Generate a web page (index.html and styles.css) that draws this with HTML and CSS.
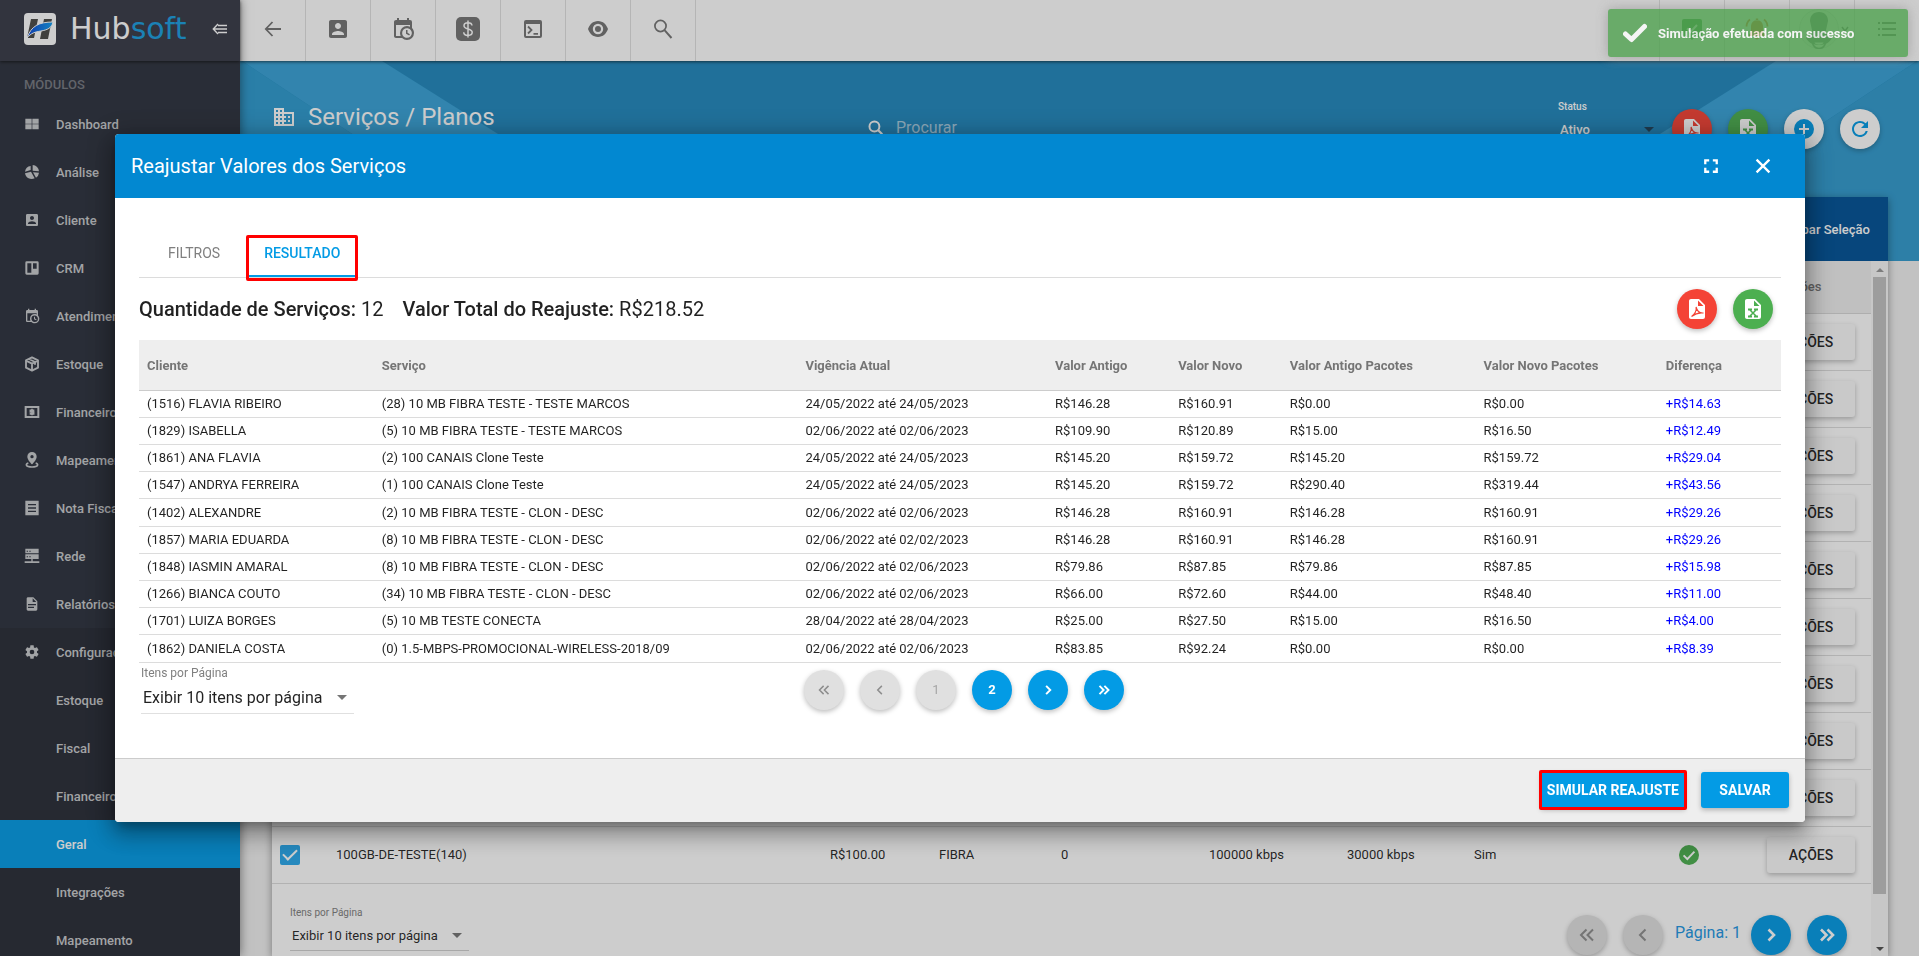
FILE: index.html
```html
<!DOCTYPE html>
<html lang="pt-BR">
<head>
<meta charset="utf-8">
<title>Hubsoft</title>
<link rel="stylesheet" href="styles.css">
</head>
<body>

<!-- icons -->
<svg class="sprite" width="0" height="0">
  <symbol id="i-grid" viewBox="0 0 24 24"><path d="M2 4h9.500v7.500H2zM12.500 4H22v7.500h-9.500zM2 12.500h9.500V20H2zM12.500 12.500H22V20h-9.500z"/></symbol>
  <symbol id="i-pie" viewBox="0 0 24 24"><path d="M10 3a10 10 0 0 0-8.500 8.500L10 9zM13 1.500V10l9.500 1A10 10 0 0 0 13 1.500zM13.500 12.500l4.500 8a10 10 0 0 0 4.500-7.500zM10.500 11.500L1.500 14a10 10 0 0 0 14.500 7.500z"/></symbol>
  <symbol id="i-account" viewBox="0 0 24 24"><path d="M3 5v14c0 1.100.890 2 2 2h14c1.100 0 2-.9 2-2V5c0-1.100-.9-2-2-2H5c-1.110 0-2 .9-2 2zm12 4c0 1.660-1.340 3-3 3s-3-1.340-3-3 1.340-3 3-3 3 1.340 3 3zm-9 8c0-2 4-3.100 6-3.100s6 1.100 6 3.100v1H6v-1z"/></symbol>
  <symbol id="i-trello" viewBox="0 0 24 24"><path fill-rule="evenodd" d="M4 2h16a2 2 0 0 1 2 2v16a2 2 0 0 1-2 2H4a2 2 0 0 1-2-2V4a2 2 0 0 1 2-2zM5 5v14h6V5zM13.500 5v8H19V5z"/></symbol>
  <symbol id="i-calendar" viewBox="0 0 24 24"><path d="M15,13H16.500V15.820L18.940,17.230L18.190,18.530L15,16.690V13M19,8H5V19H9.670C9.240,18.090 9,17.070 9,16A7,7 0 0,1 16,9C17.070,9 18.090,9.240 19,9.670V8M5,21C3.890,21 3,20.100 3,19V5C3,3.890 3.890,3 5,3H6V1H8V3H16V1H18V3H19A2,2 0 0,1 21,5V11.100C22.240,12.360 23,14.090 23,16A7,7 0 0,1 16,23C14.090,23 12.360,22.240 11.100,21H5M16,11.150A4.850,4.850 0 0,0 11.150,16C11.150,18.680 13.320,20.850 16,20.850A4.850,4.850 0 0,0 20.850,16C20.850,13.320 18.680,11.150 16,11.150Z"/></symbol>
  <symbol id="i-box" viewBox="0 0 24 24"><path d="M12 2l9 4.500v11L12 22l-9-4.500v-11zM3 7l9 4.500L21 7M12 11.500V22M7.500 4.500l9 4.500v4" fill="none" stroke="currentColor" stroke-width="2.800" stroke-linejoin="round"/></symbol>
  <symbol id="i-cash" viewBox="0 0 24 24"><path fill-rule="evenodd" d="M1 3h22v18H1zM4 6v12h16V6z"/><path d="M15.500 9.500h-6V12h5v2.800H8.500M12 7v10" fill="none" stroke="currentColor" stroke-width="2.400"/></symbol>
  <symbol id="i-pin" viewBox="0 0 24 24"><path fill-rule="evenodd" d="M12 0a7 7 0 0 1 7 7C19 12 12 18.500 12 18.500S5 12 5 7a7 7 0 0 1 7-7zm0 4.500a2.500 2.500 0 1 0 0 5 2.500 2.500 0 0 0 0-5z"/><path d="M6.500 16.500C2 18 2 22.500 12 22.500s10-4.500 5.500-6" fill="none" stroke="currentColor" stroke-width="2.600"/></symbol>
  <symbol id="i-note" viewBox="0 0 24 24"><path fill-rule="evenodd" d="M2 1h20v22H2zM6 6v2h12V6zM6 11v2h12v-2zM6 16v2h12v-2z"/></symbol>
  <symbol id="i-server" viewBox="0 0 24 24"><path fill-rule="evenodd" d="M2 1h20v7H2zM4 4v1.500h2V4zM8 4v1.500h2V4zM2 9.500h20v7H2zM4 12.500V14h2v-1.500zM8 12.500V14h2v-1.500zM11 16.500h2V20h10v2.500H1V20h10z"/></symbol>
  <symbol id="i-file" viewBox="0 0 24 24"><path d="M13,9H18.500L13,3.500V9M6,2H14L20,8V20A2,2 0 0,1 18,22H6C4.890,22 4,21.100 4,20V4C4,2.890 4.890,2 6,2M15,18V16H6V18H15M18,14V12H6V14H18Z"/></symbol>
  <symbol id="i-gear" viewBox="0 0 24 24"><path d="M12,15.500A3.500,3.500 0 0,1 8.500,12A3.500,3.500 0 0,1 12,8.500A3.500,3.500 0 0,1 15.500,12A3.500,3.500 0 0,1 12,15.500M19.430,12.970C19.470,12.650 19.500,12.330 19.500,12C19.500,11.670 19.470,11.340 19.430,11L21.540,9.370C21.730,9.220 21.780,8.950 21.660,8.730L19.660,5.270C19.540,5.050 19.270,4.960 19.050,5.050L16.560,6.050C16.040,5.660 15.500,5.320 14.870,5.070L14.500,2.420C14.460,2.180 14.250,2 14,2H10C9.750,2 9.540,2.180 9.500,2.420L9.130,5.070C8.500,5.320 7.960,5.660 7.440,6.050L4.950,5.050C4.730,4.960 4.460,5.050 4.340,5.270L2.340,8.730C2.210,8.950 2.270,9.220 2.460,9.370L4.570,11C4.530,11.340 4.500,11.670 4.500,12C4.500,12.330 4.530,12.650 4.570,12.970L2.460,14.630C2.270,14.780 2.210,15.050 2.340,15.270L4.340,18.730C4.460,18.950 4.730,19.030 4.950,18.950L7.440,17.940C7.960,18.340 8.500,18.680 9.130,18.930L9.500,21.580C9.540,21.820 9.750,22 10,22H14C14.250,22 14.460,21.820 14.500,21.580L14.870,18.930C15.500,18.670 16.040,18.340 16.560,17.940L19.050,18.950C19.270,19.030 19.540,18.950 19.660,18.730L21.660,15.270C21.780,15.050 21.730,14.780 21.540,14.630L19.430,12.970Z"/></symbol>
  <symbol id="i-domain" viewBox="0 0 24 24"><path d="M12 7V3H2v18h20V7H12zM6 19H4v-2h2v2zm0-4H4v-2h2v2zm0-4H4V9h2v2zm0-4H4V5h2v2zm4 12H8v-2h2v2zm0-4H8v-2h2v2zm0-4H8V9h2v2zm0-4H8V5h2v2zm10 12h-8v-2h2v-2h-2v-2h2v-2h-2V9h8v10zm-2-8h-2v2h2v-2zm0 4h-2v2h2v-2z"/></symbol>
  <symbol id="i-back" viewBox="0 0 24 24"><path d="M20 12H5M11.500 5L4.800 12l6.700 7" fill="none" stroke="currentColor" stroke-width="1.800"/></symbol>
  <symbol id="i-dollar" viewBox="0 0 24 24"><rect width="24" height="24" rx="5"/><path d="M16 8.500C15.800 6.600 14.300 5.700 12 5.700c-2.400 0-4 1.100-4 3 0 4.300 8.200 2.200 8.200 6.600 0 2-1.800 3.100-4.200 3.100-2.500 0-4.200-1.100-4.300-3.200M12 3.500v17" fill="none" stroke="#fff" stroke-width="1.500"/></symbol>
  <symbol id="i-console" viewBox="0 0 24 24"><path fill-rule="evenodd" d="M5 3h14a2 2 0 0 1 2 2v14a2 2 0 0 1-2 2H5a2 2 0 0 1-2-2V5a2 2 0 0 1 2-2zM5 7v12h14V7z"/><path d="M7 9.500l3.500 3.500L7 16.500M12.500 16.800H17" fill="none" stroke="currentColor" stroke-width="1.800"/></symbol>
  <symbol id="i-eye" viewBox="0 0 24 24"><path fill-rule="evenodd" d="M12 4c5 0 8.500 3.600 10 8-1.500 4.400-5 8-10 8S3.500 16.400 2 12c1.500-4.400 5-8 10-8zm0 2.800a5.200 5.200 0 1 0 0 10.400 5.200 5.200 0 0 0 0-10.400z"/><circle cx="12" cy="12" r="3"/></symbol>
  <symbol id="i-search" viewBox="0 0 24 24"><circle cx="9.500" cy="9" r="5.600" fill="none" stroke="currentColor" stroke-width="1.700"/><path d="M13.500 13.200L20.500 21" fill="none" stroke="currentColor" stroke-width="2"/></symbol>
  <symbol id="i-find" viewBox="0 0 24 24"><circle cx="10.500" cy="10.500" r="7" fill="none" stroke="currentColor" stroke-width="2.800"/><path d="M15.500 15.500L21.500 21.500" fill="none" stroke="currentColor" stroke-width="3.200"/></symbol>
  <symbol id="i-collapse" viewBox="0 0 16 12"><path d="M6 2.500h9M2 6h13M6 9.500h9M6 1L1.300 6 6 11" fill="none" stroke="currentColor" stroke-width="1.400"/></symbol>
  <symbol id="i-task" viewBox="0 0 24 24"><path d="M4 2h16a2 2 0 0 1 2 2v14a2 2 0 0 1-2 2h-5l-3 3-3-3H4a2 2 0 0 1-2-2V4a2 2 0 0 1 2-2z"/><path d="M7 11.500l3.500 3.500L17 8" fill="none" stroke="#fff" stroke-width="2"/></symbol>
  <symbol id="i-bell" viewBox="0 0 24 24"><path d="M12 3a6 6 0 0 0-6 6v6l-2 2.500V19h16v-1.500L18 15V9a6 6 0 0 0-6-6zM10 20.500a2 2 0 0 0 4 0zM10.800 1.500h2.400v2h-2.400z"/><path d="M5 2.500A9 9 0 0 0 1.500 9.500M19 2.500a9 9 0 0 1 3.500 7" fill="none" stroke="currentColor" stroke-width="1.800"/></symbol>
  <symbol id="i-person" viewBox="0 0 40 40"><circle cx="20" cy="20" r="19.500" fill="#f7f7f7" stroke="#e4e4e4"/><path d="M20 3c-6 0-9 4-9 9l2 9c0 4-2 6-6 8 3 5 7 7 13 7s10-2 13-7c-4-2-6-4-6-8l2-9c0-5-3-9-9-9z" fill="#7c8a85"/><path d="M13.500 33a6.500 6.500 0 0 0 13 0" fill="none" stroke="#7c8a85" stroke-width="1.500"/><path d="M15.500 33.500h9c-1 3-8 3-9 0z" fill="#f7f7f7"/></symbol>
  <symbol id="i-down" viewBox="0 0 8 8"><path d="M1 2l3 4 3-4" fill="none" stroke="currentColor" stroke-width="1.500"/></symbol>
  <symbol id="i-list" viewBox="0 0 20 16"><path d="M5 2h14M5 8h14M5 14h14M1 2h2M1 8h2M1 14h2" fill="none" stroke="currentColor" stroke-width="2"/></symbol>
  <symbol id="i-pdf" viewBox="0 0 24 24"><path d="M13,9H18.500L13,3.500V9M6,2H14L20,8V20A2,2 0 0,1 18,22H6C4.890,22 4,21.100 4,20V4C4,2.890 4.890,2 6,2Z"/><path d="M6.500 19.500c3.500-2.500 5-6.500 4.600-9.500 1 4 3 6.500 7.400 6-4-.6-8.500.8-12 3.500z" fill="none" stroke="#f44336" stroke-width="1.100"/></symbol>
  <symbol id="i-xls" viewBox="0 0 24 24"><path d="M13,9H18.500L13,3.500V9M6,2H14L20,8V20A2,2 0 0,1 18,22H6C4.890,22 4,21.100 4,20V4C4,2.890 4.890,2 6,2Z"/><path d="M9 13l6 6M15 13l-6 6" fill="none" stroke="#4caf50" stroke-width="1.500"/><path d="M7 11.500h4v2H7zM13 11.500h4v2h-4zM7 18.500h4v2H7zM13 18.500h4v2h-4z" fill="#4caf50"/></symbol>
  <symbol id="i-plus" viewBox="0 0 24 24"><circle cx="12" cy="12" r="10"/><path d="M12 7v10M7 12h10" stroke="#fff" stroke-width="2"/></symbol>
  <symbol id="i-refresh" viewBox="0 0 24 24"><path d="M17.650 6.350A7.958 7.958 0 0 0 12 4c-4.420 0-7.990 3.580-7.990 8s3.570 8 7.990 8c3.730 0 6.840-2.550 7.730-6h-2.080A5.990 5.990 0 0 1 12 18c-3.310 0-6-2.690-6-6s2.690-6 6-6c1.660 0 3.140.690 4.220 1.780L13 11h7V4l-2.350 2.350z"/></symbol>
  <symbol id="i-full" viewBox="0 0 24 24"><path d="M7 14H4.500v5.500H10V17H7v-3zM4.500 10H7V7h3V4.500H4.500V10zM17 17h-3v2.500h5.500V14H17v3zM14 4.500V7h3v3h2.500V4.500H14z"/></symbol>
  <symbol id="i-close" viewBox="0 0 24 24"><path d="M5 5l14 14M19 5L5 19" stroke="currentColor" stroke-width="2.500"/></symbol>
  <symbol id="i-ok" viewBox="0 0 24 24"><circle cx="12" cy="12" r="12"/><path d="M5.500 12.500l4.500 4.500 8.500-9" fill="none" stroke="#fff" stroke-width="2.400"/></symbol>
  <symbol id="i-check" viewBox="0 0 24 20"><path d="M2.500 11L8.500 16.500 21.500 3.500" fill="none" stroke="currentColor" stroke-width="5" stroke-linecap="round" stroke-linejoin="round"/></symbol>
  <symbol id="i-first" viewBox="0 0 24 24"><path d="M11.500 6.500L6 12l5.500 5.500M18 6.500L12.500 12l5.500 5.500" fill="none" stroke="currentColor" stroke-width="2"/></symbol>
  <symbol id="i-prev" viewBox="0 0 24 24"><path d="M14.500 6.500L9 12l5.500 5.500" fill="none" stroke="currentColor" stroke-width="2"/></symbol>
  <symbol id="i-next" viewBox="0 0 24 24"><path d="M9.500 6.500L15 12l-5.500 5.500" fill="none" stroke="currentColor" stroke-width="2.600"/></symbol>
  <symbol id="i-last" viewBox="0 0 24 24"><path d="M6 6.500l5.500 5.500L6 17.500M12.500 6.500L18 12l-5.500 5.500" fill="none" stroke="currentColor" stroke-width="2.600"/></symbol>
</svg>

<div class="app">

  <aside class="sidebar">
    <div class="brand">
      <svg class="brand-mark" viewBox="0 0 32 32">
        <defs><linearGradient id="swoosh"><stop offset="0" stop-color="#0b45d8"/><stop offset="1" stop-color="#10a0f0"/></linearGradient></defs>
        <rect width="32" height="32" rx="4" fill="#fff"/>
        <path d="M7 6h7l-4 19H3zM20 6h8l-4 20h-8z" fill="#4a4a48"/>
        <path d="M3 25C7 13 15 9 29 9c-1 6-6 8-12 9-6 1-10 2-14 7z" fill="url(#swoosh)" stroke="#fff" stroke-width="1"/>
      </svg>
      <span class="brand-name">Hub<span>soft</span></span>
      <button class="collapse" aria-label="Recolher"><svg><use href="#i-collapse"/></svg></button>
    </div>
    <nav class="menu">
      <h2>MÓDULOS</h2>
      <a href="#"><svg><use href="#i-grid"/></svg>Dashboard</a>
      <a href="#"><svg><use href="#i-pie"/></svg>Análise</a>
      <a href="#"><svg><use href="#i-account"/></svg>Cliente</a>
      <a href="#"><svg><use href="#i-trello"/></svg>CRM</a>
      <a href="#"><svg><use href="#i-calendar"/></svg>Atendimento</a>
      <a href="#"><svg><use href="#i-box"/></svg>Estoque</a>
      <a href="#"><svg><use href="#i-cash"/></svg>Financeiro</a>
      <a href="#"><svg><use href="#i-pin"/></svg>Mapeamento</a>
      <a href="#"><svg><use href="#i-note"/></svg>Nota Fiscal</a>
      <a href="#"><svg><use href="#i-server"/></svg>Rede</a>
      <a href="#"><svg><use href="#i-file"/></svg>Relatórios</a>
      <div class="submenu">
        <a href="#"><svg><use href="#i-gear"/></svg>Configurações</a>
        <a class="sub" href="#">Estoque</a>
        <a class="sub" href="#">Fiscal</a>
        <a class="sub" href="#">Financeiro</a>
        <a class="sub active" href="#">Geral</a>
        <a class="sub" href="#">Integrações</a>
        <a class="sub" href="#">Mapeamento</a>
      </div>
    </nav>
  </aside>

  <div class="main">
    <header class="toolbar">
      <button aria-label="Voltar"><svg><use href="#i-back"/></svg></button>
      <button aria-label="Cliente"><svg><use href="#i-account"/></svg></button>
      <button aria-label="Agenda"><svg><use href="#i-calendar"/></svg></button>
      <button aria-label="Financeiro"><svg><use href="#i-dollar"/></svg></button>
      <button aria-label="Console"><svg><use href="#i-console"/></svg></button>
      <button aria-label="Visualizar"><svg><use href="#i-eye"/></svg></button>
      <button aria-label="Buscar"><svg><use href="#i-search"/></svg></button>
      <div class="toolbar-right">
        <button class="green" aria-label="Tarefas"><svg><use href="#i-task"/></svg></button>
        <button class="orange" aria-label="Notificações"><svg><use href="#i-bell"/></svg></button>
        <button class="user" aria-label="Usuário"><svg><use href="#i-person"/></svg><svg class="caret"><use href="#i-down"/></svg></button>
        <button aria-label="Lista"><svg class="list"><use href="#i-list"/></svg></button>
      </div>
    </header>

    <div class="hero">
      <svg class="hero-art" viewBox="0 0 1679 200" preserveAspectRatio="none">
        <path d="M2 0H142L460 200H304z" fill="#38a2d7"/>
        <path d="M0 0H2L304 200H0z" fill="#2e9bd0"/>
        <path d="M1677 0H1536L1218 200H1374z" fill="#38a2d7"/>
        <path d="M1679 0H1677L1374 200H1679z" fill="#319bcf"/>
      </svg>
      <div class="page-head">
        <h1><svg><use href="#i-domain"/></svg>Serviços / Planos</h1>
        <div class="search">
          <svg><use href="#i-find"/></svg>
          <input type="text" placeholder="Procurar" aria-label="Procurar">
        </div>
        <div class="head-actions">
          <div class="status">
            <label for="status">Status</label>
            <div class="pick"><select id="status"><option>Ativo</option></select><i></i></div>
          </div>
          <button class="round red" aria-label="PDF"><svg><use href="#i-pdf"/></svg></button>
          <button class="round green" aria-label="Excel"><svg><use href="#i-xls"/></svg></button>
          <button class="round white" aria-label="Adicionar"><svg><use href="#i-plus"/></svg></button>
          <button class="round white" aria-label="Atualizar"><svg><use href="#i-refresh"/></svg></button>
        </div>
      </div>
    </div>

    <section class="card">
      <div class="card-bar"><button>Limpar Seleção</button></div>
      <div class="card-body">
        <div class="card-scroll">
          <table class="plans">
            <colgroup><col class="w-sel"><col><col class="w-price"><col class="w-kind"><col class="w-qty"><col class="w-down"><col class="w-up"><col class="w-flag"><col class="w-ok"><col class="w-act"></colgroup>
            <thead><tr><th></th><th></th><th></th><th></th><th></th><th></th><th></th><th></th><th></th><th>Ações</th></tr></thead>
            <tbody>
              <tr><td colspan="9"></td><td><button class="flat">AÇÕES</button></td></tr>
              <tr><td colspan="9"></td><td><button class="flat">AÇÕES</button></td></tr>
              <tr><td colspan="9"></td><td><button class="flat">AÇÕES</button></td></tr>
              <tr><td colspan="9"></td><td><button class="flat">AÇÕES</button></td></tr>
              <tr><td colspan="9"></td><td><button class="flat">AÇÕES</button></td></tr>
              <tr><td colspan="9"></td><td><button class="flat">AÇÕES</button></td></tr>
              <tr><td colspan="9"></td><td><button class="flat">AÇÕES</button></td></tr>
              <tr><td colspan="9"></td><td><button class="flat">AÇÕES</button></td></tr>
              <tr><td colspan="9"></td><td><button class="flat">AÇÕES</button></td></tr>
              <tr>
                <td><input type="checkbox" checked aria-label="Selecionar"></td>
                <td>100GB-DE-TESTE(140)</td><td>R$100.00</td><td>FIBRA</td><td>0</td>
                <td>100000 kbps</td><td>30000 kbps</td><td>Sim</td>
                <td><svg class="ok"><use href="#i-ok"/></svg></td>
                <td><button class="flat">AÇÕES</button></td>
              </tr>
            </tbody>
          </table>
          <div class="card-foot">
            <div class="per-page small">
              <label for="pp1">Itens por Página</label>
              <div class="pick"><select id="pp1"><option>Exibir 10 itens por página</option></select><i></i></div>
            </div>
            <div class="pages">
              <button class="round off" aria-label="Primeira"><svg><use href="#i-first"/></svg></button>
              <button class="round off" aria-label="Anterior"><svg><use href="#i-prev"/></svg></button>
              <span>Página: 1</span>
              <button class="round blue" aria-label="Próxima"><svg><use href="#i-next"/></svg></button>
              <button class="round blue" aria-label="Última"><svg><use href="#i-last"/></svg></button>
            </div>
          </div>
        </div>
        <div class="scrollbar"><i class="up"></i><b></b><i class="down"></i></div>
      </div>
    </section>
  </div>
</div>

<div class="backdrop">
  <div class="dialog" role="dialog" aria-labelledby="dlg-title">
    <header class="dialog-head">
      <h2 id="dlg-title">Reajustar Valores dos Serviços</h2>
      <button aria-label="Tela cheia"><svg><use href="#i-full"/></svg></button>
      <button aria-label="Fechar"><svg><use href="#i-close"/></svg></button>
    </header>

    <div class="dialog-body">
      <div class="tabs" role="tablist">
        <button role="tab">FILTROS</button>
        <button role="tab" class="current marked" aria-selected="true">RESULTADO</button>
      </div>

      <div class="totals">
        <p><b>Quantidade de Serviços:</b> 12</p>
        <p><b>Valor Total do Reajuste:</b> R$218.52</p>
        <div class="exports">
          <button class="round red" aria-label="Exportar PDF"><svg><use href="#i-pdf"/></svg></button>
          <button class="round green" aria-label="Exportar Excel"><svg><use href="#i-xls"/></svg></button>
        </div>
      </div>

      <table class="result">
        <thead>
          <tr><th>Cliente</th><th>Serviço</th><th>Vigência Atual</th><th>Valor Antigo</th><th>Valor Novo</th><th>Valor Antigo Pacotes</th><th>Valor Novo Pacotes</th><th>Diferença</th></tr>
        </thead>
        <tbody>
          <tr><td>(1516) FLAVIA RIBEIRO</td><td>(28) 10 MB FIBRA TESTE - TESTE MARCOS</td><td>24/05/2022 até 24/05/2023</td><td>R$146.28</td><td>R$160.91</td><td>R$0.00</td><td>R$0.00</td><td>+R$14.63</td></tr>
          <tr><td>(1829) ISABELLA</td><td>(5) 10 MB FIBRA TESTE - TESTE MARCOS</td><td>02/06/2022 até 02/06/2023</td><td>R$109.90</td><td>R$120.89</td><td>R$15.00</td><td>R$16.50</td><td>+R$12.49</td></tr>
          <tr><td>(1861) ANA FLAVIA</td><td>(2) 100 CANAIS Clone Teste</td><td>24/05/2022 até 24/05/2023</td><td>R$145.20</td><td>R$159.72</td><td>R$145.20</td><td>R$159.72</td><td>+R$29.04</td></tr>
          <tr><td>(1547) ANDRYA FERREIRA</td><td>(1) 100 CANAIS Clone Teste</td><td>24/05/2022 até 24/05/2023</td><td>R$145.20</td><td>R$159.72</td><td>R$290.40</td><td>R$319.44</td><td>+R$43.56</td></tr>
          <tr><td>(1402) ALEXANDRE</td><td>(2) 10 MB FIBRA TESTE - CLON - DESC</td><td>02/06/2022 até 02/06/2023</td><td>R$146.28</td><td>R$160.91</td><td>R$146.28</td><td>R$160.91</td><td>+R$29.26</td></tr>
          <tr><td>(1857) MARIA EDUARDA</td><td>(8) 10 MB FIBRA TESTE - CLON - DESC</td><td>02/06/2022 até 02/02/2023</td><td>R$146.28</td><td>R$160.91</td><td>R$146.28</td><td>R$160.91</td><td>+R$29.26</td></tr>
          <tr><td>(1848) IASMIN AMARAL</td><td>(8) 10 MB FIBRA TESTE - CLON - DESC</td><td>02/06/2022 até 02/06/2023</td><td>R$79.86</td><td>R$87.85</td><td>R$79.86</td><td>R$87.85</td><td>+R$15.98</td></tr>
          <tr><td>(1266) BIANCA COUTO</td><td>(34) 10 MB FIBRA TESTE - CLON - DESC</td><td>02/06/2022 até 02/06/2023</td><td>R$66.00</td><td>R$72.60</td><td>R$44.00</td><td>R$48.40</td><td>+R$11.00</td></tr>
          <tr><td>(1701) LUIZA BORGES</td><td>(5) 10 MB TESTE CONECTA</td><td>28/04/2022 até 28/04/2023</td><td>R$25.00</td><td>R$27.50</td><td>R$15.00</td><td>R$16.50</td><td>+R$4.00</td></tr>
          <tr><td>(1862) DANIELA COSTA</td><td>(0) 1.5-MBPS-PROMOCIONAL-WIRELESS-2018/09</td><td>02/06/2022 até 02/06/2023</td><td>R$83.85</td><td>R$92.24</td><td>R$0.00</td><td>R$0.00</td><td>+R$8.39</td></tr>
        </tbody>
      </table>

      <div class="result-foot">
        <div class="per-page">
          <label for="pp2">Itens por Página</label>
          <div class="pick"><select id="pp2"><option>Exibir 10 itens por página</option></select><i></i></div>
        </div>
        <div class="pages">
          <button class="round off" aria-label="Primeira"><svg><use href="#i-first"/></svg></button>
          <button class="round off" aria-label="Anterior"><svg><use href="#i-prev"/></svg></button>
          <button class="round off">1</button>
          <button class="round blue">2</button>
          <button class="round blue" aria-label="Próxima"><svg><use href="#i-next"/></svg></button>
          <button class="round blue" aria-label="Última"><svg><use href="#i-last"/></svg></button>
        </div>
      </div>
    </div>

    <footer class="dialog-foot">
      <button class="primary wide marked">SIMULAR REAJUSTE</button>
      <button class="primary">SALVAR</button>
    </footer>
  </div>
</div>

<div class="toast" role="status"><svg><use href="#i-check"/></svg>Simulação efetuada com sucesso</div>

</body>
</html>
```

FILE: styles.css
```css
* { box-sizing: border-box; }
html, body { height: 100%; margin: 0; overflow: hidden; }
body { font-family: Roboto, "Noto Sans", sans-serif; font-size: 13px; color: rgba(0,0,0,.87); background: #f1f1f1; }
h1, h2, p { margin: 0; font-weight: 400; }
a { text-decoration: none; color: inherit; }
button, select, input { font: inherit; color: inherit; }
button { border: 0; padding: 0; background: none; cursor: pointer; }
svg { fill: currentColor; display: block; }
.sprite { position: absolute; }

.app { display: flex; height: 100vh; overflow: hidden; }

/* sidebar */
.sidebar { flex: 0 0 240px; background: #2d323e; color: #c8cacd; box-shadow: 0 0 10px rgba(0,0,0,.5); z-index: 2; }
.brand { display: flex; align-items: center; height: 61px; padding: 0 12px 3px 24px; background: #383a48; color: #fff; box-shadow: 0 1px 3px rgba(0,0,0,.6); }
.brand-mark { width: 32px; height: 32px; margin-right: 14px; }
.brand-name { flex: 1; font-family: "DejaVu Sans", sans-serif; font-size: 30px; line-height: 32px; }
.brand-name span { color: #1a9fe0; }
.collapse svg { width: 16px; height: 12px; }
.menu { display: flex; flex-direction: column; }
.menu h2 { height: 39px; padding: 4px 24px 0; line-height: 39px; font-size: 13px; font-weight: 500; color: #767981; }
.menu a { display: flex; align-items: center; height: 48px; padding: 0 24px; font-weight: 500; }
.menu svg { width: 16px; height: 16px; margin-right: 16px; }
.menu .sub { padding-left: 56px; }
.submenu { background: #282c37; }
.menu .active { background: #039be5; color: #fff; }

/* toolbar */
.main { flex: 1; min-width: 0; display: flex; flex-direction: column; }
.toolbar { flex: 0 0 61px; display: flex; padding-left: 1px; background: #fff; color: #757575; box-shadow: 0 1px 3px rgba(0,0,0,.6); z-index: 1; }
.toolbar button { display: flex; align-items: center; justify-content: center; width: 65px; padding-bottom: 3px; border-right: 1px solid #e0e0e0; }
.toolbar svg { width: 24px; height: 24px; }
.toolbar-right { display: flex; margin-left: auto; }
.toolbar-right button { border-right: 0; border-left: 1px solid #e0e0e0; }
.toolbar .green { color: #43a047; }
.toolbar .orange { color: #e8722c; }
.toolbar .user { gap: 2px; padding-left: 4px; }
.toolbar .user svg { width: 40px; height: 40px; }
.toolbar .user .caret { width: 8px; height: 8px; }
.toolbar .list { width: 20px; height: 16px; }

/* page header */
.hero { flex: 0 0 200px; display: grid; background: #2188be; }
.hero-art { grid-area: 1 / 1; width: 100%; height: 200px; }
.page-head { grid-area: 1 / 1; display: grid; grid-template-columns: 37% 1fr auto; align-items: center; height: 136px; padding: 0 39px 0 32px; color: #fff; }
.page-head h1 { display: flex; align-items: center; gap: 12px; padding-bottom: 24px; font-size: 24px; }
.page-head h1 svg { width: 24px; height: 24px; }
.search { display: flex; align-items: center; gap: 12px; padding-bottom: 4px; font-size: 16px; }
.search svg { width: 17px; height: 17px; }
.search input { border: 0; padding: 0; background: none; outline: 0; }
.search input::placeholder { color: #a9cfe4; }
.head-actions { display: flex; align-items: center; gap: 16px; }
.status { width: 98px; padding-bottom: 16px; font-weight: 500; }
.status label { display: block; font-size: 10px; line-height: 16px; }
.status .pick { height: 28px; padding: 0 2px; }

.pick { display: flex; align-items: center; }
.pick select { flex: 1; min-width: 0; appearance: none; border: 0; padding: 0; background: none; outline: 0; }
.pick i { border: solid transparent; border-width: 5px 5px 0; border-top-color: #757575; }
.status i { border-top-color: #20435c; }

.round { display: flex; align-items: center; justify-content: center; width: 40px; height: 40px; border-radius: 50%; box-shadow: 0 2px 5px rgba(0,0,0,.26); }
.round svg { width: 24px; height: 24px; }
.red { background: #f44336; color: #fff; }
.round.green { background: #4caf50; color: #fff; }
.white { background: #fff; color: #039be5; }
.blue { background: #039be5; color: #fff; font-weight: 700; }
.off { background: #e0e0e0; color: #a6a6a6; }

/* card */
.card { flex: 1; display: flex; flex-direction: column; margin: -64px 31px 0 32px; background: #fff; box-shadow: 0 2px 8px rgba(0,0,0,.4); z-index: 0; }
.card-bar { flex: 0 0 64px; display: flex; justify-content: flex-end; padding-right: 18px; background: #015297; color: #fff; font-weight: 500; }
.card-body { flex: 1; display: flex; min-height: 0; }
.card-scroll { flex: 1; }
.plans { width: 100%; table-layout: fixed; border-collapse: collapse; }
.plans th { height: 52px; padding: 0 8px; background: #eee; color: #757575; font-weight: 500; text-align: left; border-bottom: 1px solid #d8d8d8; }
.plans td { height: 57px; padding: 0 8px; border-bottom: 1px solid #dcdcdc; }
.w-sel { width: 56px; }
.w-price { width: 109px; }
.w-kind { width: 122px; }
.w-qty { width: 148px; }
.w-down { width: 138px; }
.w-up { width: 127px; }
.w-flag { width: 205px; }
.w-ok { width: 88px; }
.w-act { width: 112px; }
.plans th:last-child { padding-left: 26px; }
.plans input { display: flex; align-items: center; justify-content: center; appearance: none; width: 20px; height: 20px; margin: 0; border-radius: 2px; background: #29a8ec; }
.plans input::before { content: ""; width: 6px; height: 12px; margin-bottom: 3px; border: solid #fff; border-width: 0 2px 2px 0; transform: rotate(45deg); }
.ok { width: 20px; height: 20px; color: #4caf50; }
.flat { width: 88px; height: 36px; border-radius: 3px; background: #fafafa; font-size: 14px; font-weight: 500; box-shadow: 0 2px 5px rgba(0,0,0,.26); }
.card-foot { display: flex; align-items: flex-start; justify-content: space-between; padding: 20px 24px 0 18px; }
.pages { display: flex; gap: 16px; }
.card-foot .pages { align-items: center; height: 40px; margin-top: 11px; }
.card-foot .pages span { margin: 0 -6px 4px -4px; font-size: 16px; color: #2196e3; }
.off svg { color: #8d8d8d; }

.scrollbar { flex: 0 0 17px; display: flex; flex-direction: column; align-items: center; gap: 5px; padding: 7px 0 5px; background: #f8f8f8; }
.scrollbar b { flex: 0 1 617px; width: 13px; background: #c1c1c1; }
.scrollbar i { border: solid transparent; border-width: 0 4px 4px; border-bottom-color: #999; }
.scrollbar .down { margin-top: auto; border-width: 4px 4px 0; border-top-color: #505050; }

/* itens por pagina */
.per-page { width: 213px; border-bottom: 1px solid #e0e0e0; }
.per-page label { display: block; font-size: 12px; line-height: 18px; color: #808080; }
.per-page .pick { height: 31px; padding: 1px 7px 0 2px; font-size: 16px; }
.per-page.small { width: 179px; border-color: #d0d0d0; }
.small label { font-size: 10px; }
.small .pick { height: 28px; padding-top: 0; font-size: 13px; }

/* dialog */
.backdrop { position: fixed; inset: 0; display: flex; align-items: center; justify-content: center; background: rgba(33,33,33,.225); z-index: 10; }
.dialog { flex: 1; margin: 0 114px 0 115px; border-radius: 4px; background: #fff; overflow: hidden; box-shadow: 0 7px 8px -4px rgba(0,0,0,.2), 0 13px 19px 2px rgba(0,0,0,.14), 0 5px 24px 4px rgba(0,0,0,.3); }
.dialog-head { display: flex; align-items: center; gap: 12px; height: 64px; padding: 0 22px 0 16px; background: #0288d1; color: #fff; }
.dialog-head h2 { flex: 1; font-size: 20px; }
.dialog-head button { width: 40px; height: 40px; padding: 9px; }
.dialog-head svg { width: 22px; height: 22px; }
.dialog-body { padding: 31px 24px 44px; }
.tabs { display: flex; gap: 10px; height: 49px; padding-left: 12px; border-bottom: 1px solid #dcdcdc; }
.tabs button { padding: 0 17px; font-size: 14px; color: #7f7f7f; }
.tabs .current { font-weight: 500; color: #039be5; box-shadow: inset 0 -2px #039be5; }

/* red frame round the highlighted controls */
.marked { position: relative; }
.marked::after { content: ""; position: absolute; inset: -2px; border: 3px solid #f00; border-radius: 2px; }
.tabs .marked::after { inset: 6px -1px -4px; }

.totals { display: flex; align-items: center; gap: 19px; height: 62px; padding-right: 8px; font-size: 20px; font-weight: 300; }
.totals b { font-weight: 500; }
.exports { display: flex; gap: 16px; margin-left: auto; }

.result { width: 100%; table-layout: fixed; border-collapse: collapse; }
.result th { height: 50px; padding: 0 8px; background: #eee; color: #757575; font-weight: 700; text-align: left; border-bottom: 1px solid #ccc; }
.result td { height: 27px; padding: 0 8px; border-bottom: 1px solid #dcdcdc; white-space: nowrap; }
.result tr:nth-child(5n) td { height: 28px; }
.result th:nth-child(1) { width: 14.3%; }
.result th:nth-child(2) { width: 25.8%; }
.result th:nth-child(3) { width: 15.2%; }
.result th:nth-child(4) { width: 7.5%; }
.result th:nth-child(5) { width: 6.8%; }
.result th:nth-child(6) { width: 11.8%; }
.result th:nth-child(7) { width: 11.1%; }
.result th:nth-child(8) { width: 7.5%; }
.result td:last-child { color: #00f; }

.result-foot { display: grid; grid-template-columns: 1fr auto 1fr; padding: 1px 0 0 2px; }
.result-foot .pages { padding: 6px 0 0 6px; }
.result-foot svg { width: 18px; height: 18px; }

.dialog-foot { display: flex; align-items: center; justify-content: flex-end; gap: 16px; height: 64px; padding: 0 16px 1px 0; background: #eee; border-top: 1px solid #ccc; }
.primary { min-width: 88px; height: 36px; padding: 0 6px; border-radius: 3px; background: #039be5; color: #fff; font-size: 14px; font-weight: 700; box-shadow: 0 2px 5px rgba(0,0,0,.26); }
.wide { border-radius: 0; }

/* toast */
.toast { position: fixed; top: 9px; right: 11px; display: flex; align-items: center; gap: 11px; width: 300px; height: 48px; padding-left: 15px; border-radius: 3px; background: #51a351; color: #fff; font-weight: 700; opacity: .8; box-shadow: 0 0 12px #999; z-index: 20; }
.toast svg { width: 24px; height: 20px; }
```
